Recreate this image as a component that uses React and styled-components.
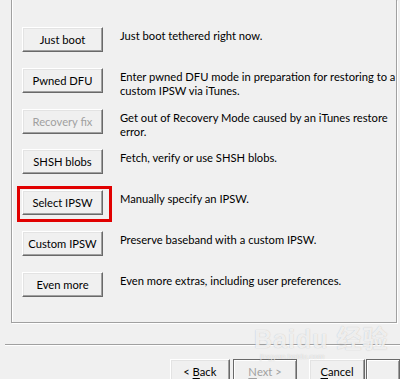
import React from "react";
import styled, { createGlobalStyle } from "styled-components";

const Global = createGlobalStyle`
  html, body { margin: 0; padding: 0; }
  body {
    background: #f0f0f0;
    font-family: Lato, "Liberation Sans", sans-serif;
    font-size: 11px;
    color: #000;
    width: 400px;
    height: 379px;
    overflow: hidden;
  }
`;

const Page = styled.div`
  position: relative;
  width: 400px;
  height: 379px;
  overflow: hidden;
  background: #f0f0f0;
`;

const Group = styled.div`
  margin-left: 11px;
  width: 386px;
  height: 323px;
  border: 1px solid #a0a0a0;
  border-top: none;
  box-shadow: inset 1px 0 0 #fff, 1px 1px 0 #fff;
  box-sizing: border-box;
  padding: 27px 0 0 10px;
  display: flex;
  flex-direction: column;
  gap: 15.8px;
`;

const Row = styled.div`
  display: grid;
  grid-template-columns: 81px 1fr;
  column-gap: 17px;
  align-items: start;
  height: 25px;
`;

const BtnWrap = styled.div`
  position: relative;
`;

const Button = styled.div`
  box-sizing: border-box;
  width: ${(p) => p.$w || 81}px;
  height: 25px;
  border: 1px solid;
  border-color: #fff #696969 #696969 #fff;
  box-shadow: inset -1px -1px 0 #a0a0a0, inset 1px 1px 0 #e3e3e3;
  background: #f0f0f0;
  display: flex;
  align-items: center;
  justify-content: center;
  font-size: 11.2px;
  color: ${(p) => (p.$disabled ? "#a0a0a0" : "#000")};
  white-space: nowrap;
`;

const Highlight = styled.div`
  position: absolute;
  left: -5px;
  top: -4px;
  width: 95px;
  height: 36px;
  border: 3px solid #e10000;
  box-sizing: border-box;
`;

const Desc = styled.div`
  padding-top: 2px;
  line-height: 14px;
  font-size: 11.2px;
  white-space: pre;
`;

const Separator = styled.div`
  margin: 21px 0 0 5px;
  height: 1px;
  background: #a0a0a0;
  box-shadow: 0 1px 0 #fff;
`;

const Footer = styled.div`
  display: flex;
  margin: 14px 0 0 170px;
  align-items: flex-start;
`;

const NavButton = styled(Button)`
  height: 24px;
  margin-right: ${(p) => p.$mr || 0}px;
  ${(p) =>
    p.$default &&
    `border: 1px solid #696969; box-shadow: inset 1px 1px 0 #fff, inset -1px -1px 0 #a0a0a0;`}
`;

const U = styled.span`
  text-decoration: underline;
  text-underline-offset: 2px;
`;

const Watermark = styled.div`
  position: absolute;
  left: 254px;
  top: 326px;
  color: rgba(255, 255, 255, 0.75);
  text-shadow: 0 0 1px rgba(150, 150, 150, 0.6);
  pointer-events: none;
  font-family: "Liberation Sans", "Noto Sans CJK SC", sans-serif;
`;

const WmMain = styled.div`
  font-size: 25px;
  font-weight: bold;
  letter-spacing: 1px;
  line-height: 26px;
`;

const WmSub = styled.div`
  font-size: 8px;
  margin-left: 6px;
  line-height: 9px;
`;

const rows = [
  { label: "Just boot", desc: "Just boot tethered right now." },
  {
    label: "Pwned DFU",
    desc: "Enter pwned DFU mode in preparation for restoring to a\ncustom IPSW via iTunes.",
  },
  {
    label: "Recovery fix",
    disabled: true,
    desc: "Get out of Recovery Mode caused by an iTunes restore\nerror.",
  },
  { label: "SHSH blobs", desc: "Fetch, verify or use SHSH blobs." },
  { label: "Select IPSW", desc: "Manually specify an IPSW.", highlight: true },
  { label: "Custom IPSW", desc: "Preserve baseband with a custom IPSW." },
  { label: "Even more", desc: "Even more extras, including user preferences." },
];

export default function App() {
  return (
    <Page>
      <Global />
      <Group>
        {rows.map((r) => (
          <Row key={r.label}>
            <BtnWrap>
              {r.highlight && <Highlight />}
              <Button $disabled={r.disabled}>{r.label}</Button>
            </BtnWrap>
            <Desc>{r.desc}</Desc>
          </Row>
        ))}
      </Group>
      <Separator />
      <Footer>
        <NavButton $w={70} $mr={3}>
          &lt;&nbsp;<U>B</U>ack
        </NavButton>
        <NavButton $w={76} $mr={12} $disabled $default>
          <U>N</U>ext &gt;
        </NavButton>
        <NavButton $w={65} $mr={1}>
          <U>C</U>ancel
        </NavButton>
        <NavButton $w={40} $default />
      </Footer>
      <Watermark>
        <WmMain>Baidu 经验</WmMain>
        <WmSub>jingyan.baidu.com</WmSub>
      </Watermark>
    </Page>
  );
}
